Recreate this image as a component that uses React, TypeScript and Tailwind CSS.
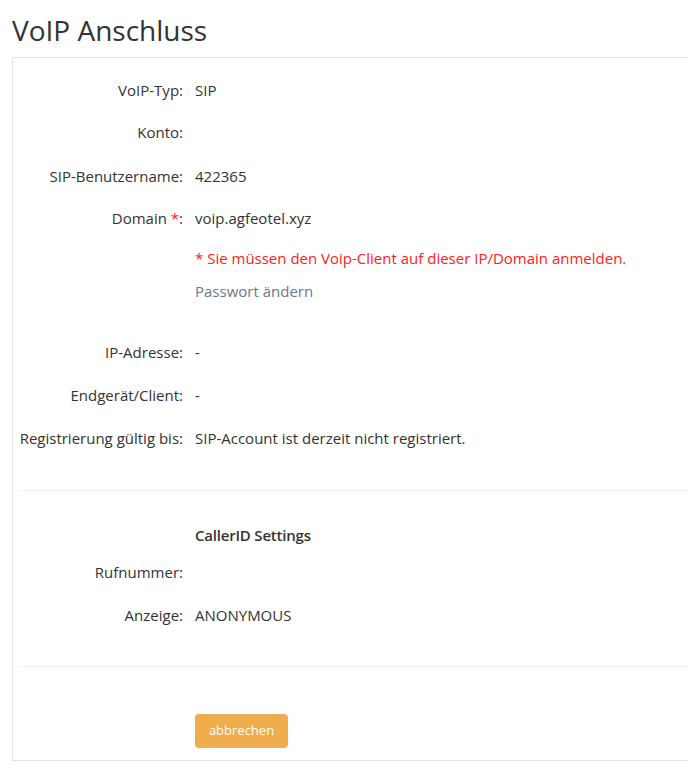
import React from 'react';

const Row = ({ label, children, className }: { label?: React.ReactNode; children?: React.ReactNode; className: string }) => (
  <div className={`flex items-center ${className}`}>
    <div className="w-[164px] shrink-0 text-right">{label}</div>
    <div className="pl-[12px]">{children}</div>
  </div>
);

const App = () => {
  return (
    <div className="w-[688px] h-[776px] overflow-hidden bg-white text-[#333333] text-[15px] font-['Open_Sans',sans-serif]">
      <h1 className="pl-[12px] pt-[12px] h-[57px] text-[28px] leading-[36px] font-normal">VoIP Anschluss</h1>

      <div className="ml-[12px] w-[720px] border border-[#e3e3e3] pl-[6px] pt-[11px] pb-[12px]">
        {/* Account */}
        <Row label="VoIP-Typ:" className="h-[42px]">SIP</Row>
        <Row label="Konto:" className="h-[42px]" />
        <Row label="SIP-Benutzername:" className="h-[42px] mt-[2px]">422365</Row>
        <Row
          label={
            <>
              Domain <span className="text-[#ff2020]">*</span>:
            </>
          }
          className="h-[42px]"
        >
          voip.agfeotel.xyz
        </Row>
        <Row className="h-[24px] mt-[7px]">
          <span className="text-[#ff2020]">* Sie müssen den Voip-Client auf dieser IP/Domain anmelden.</span>
        </Row>
        <Row className="h-[24px] mt-[9px]">
          <a href="#" className="text-[#6b7888]">Passwort ändern</a>
        </Row>
        <Row label="IP-Adresse:" className="h-[42px] mt-[28px]">-</Row>
        <Row label="Endgerät/Client:" className="h-[42px] mt-[1px]">-</Row>
        <Row label="Registrierung gültig bis:" className="h-[42px] mt-[1px]">
          SIP-Account ist derzeit nicht registriert.
        </Row>

        <div className="h-px bg-[#eeeeee] mt-[31px]" />

        {/* CallerID */}
        <Row className="h-[36px] mt-[26px]">
          <span className="font-semibold tracking-[-0.2px]">CallerID Settings</span>
        </Row>
        <Row label="Rufnummer:" className="h-[36px] mt-[1px]" />
        <Row label="Anzeige:" className="h-[36px] mt-[7px]">ANONYMOUS</Row>

        <div className="h-px bg-[#eeeeee] mt-[33px]" />

        <Row className="h-[34px] mt-[47px]">
          <button className="h-[34px] w-[93px] rounded-[4px] bg-[#f0ad4e] text-white text-[13px]">abbrechen</button>
        </Row>
      </div>
    </div>
  );
};

export default App;
